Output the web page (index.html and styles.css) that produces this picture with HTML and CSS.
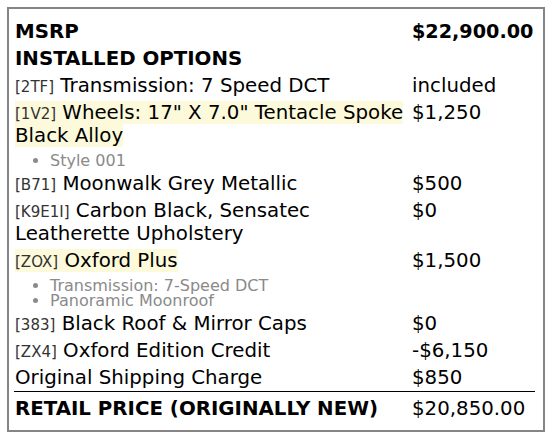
FILE: index.html
```html
<!DOCTYPE html>
<html>
<head>
<meta charset="utf-8">
<link rel="stylesheet" href="styles.css">
</head>
<body>
<div class="sticker">
  <table class="price-table">
    <colgroup><col class="c-desc"><col class="c-price"></colgroup>
    <tr class="bold"><td>MSRP</td><td class="msrp-price">$22,900.00</td></tr>
    <tr class="bold"><td colspan="2">INSTALLED OPTIONS</td></tr>
    <tr><td><span class="code">[2TF]</span> Transmission: 7 Speed DCT</td><td>included</td></tr>
    <tr><td><span class="hl"><span class="code">[1V2]</span> Wheels: 17" X 7.0" Tentacle Spoke Black Alloy</span>
      <ul class="sub"><li>Style 001</li></ul></td><td>$1,250</td></tr>
    <tr><td><span class="code">[B71]</span> Moonwalk Grey Metallic</td><td>$500</td></tr>
    <tr><td><span class="code">[K9E1I]</span> Carbon Black, Sensatec Leatherette Upholstery</td><td>$0</td></tr>
    <tr><td><span class="hl"><span class="code">[ZOX]</span> Oxford Plus</span>
      <ul class="sub"><li>Transmission: 7-Speed DCT</li><li>Panoramic Moonroof</li></ul></td><td>$1,500</td></tr>
    <tr><td><span class="code">[383]</span> Black Roof &amp; Mirror Caps</td><td>$0</td></tr>
    <tr><td><span class="code">[ZX4]</span> Oxford Edition Credit</td><td>-$6,150</td></tr>
    <tr><td>Original Shipping Charge</td><td>$850</td></tr>
    <tr class="total"><td>RETAIL PRICE (ORIGINALLY NEW)</td><td>$20,850.00</td></tr>
  </table>
</div>
</body>
</html>
```
FILE: styles.css
```css
html, body {
  margin: 0;
  padding: 0;
  background: #fff;
}
.sticker {
  margin: 7px;
  width: 534px;
  height: 421px;
  border: 2px solid #858585;
  box-sizing: content-box;
  padding: 0;
  font-family: "DejaVu Sans", sans-serif;
  color: #000;
}
.price-table {
  margin: 8.5px 0 0 5px;
  width: 521px;
  table-layout: fixed;
  border-collapse: collapse;
  font-size: 19.8px;
  line-height: 23px;
}
.c-desc { width: 397px; }
.c-price { width: 124px; }
.price-table td {
  padding: 2px 1px;
  vertical-align: top;
}
.price-table td + td { white-space: nowrap; }
.bold td { font-weight: bold; }
.bold td.msrp-price { font-size: 19.2px; }
.code {
  font-size: 15px;
  line-height: 1;
  color: #333;
}
.hl { background: #fdfadb; }
.sub {
  margin: 6px 0 0;
  padding: 0 0 0 35px;
  list-style: disc;
  color: #8a8a8a;
  font-size: 16px;
  line-height: 15px;
}
.total td {
  border-top: 1px solid #000;
  font-weight: bold;
  padding-top: 5px;
}
.total td + td { font-weight: normal; }
```
